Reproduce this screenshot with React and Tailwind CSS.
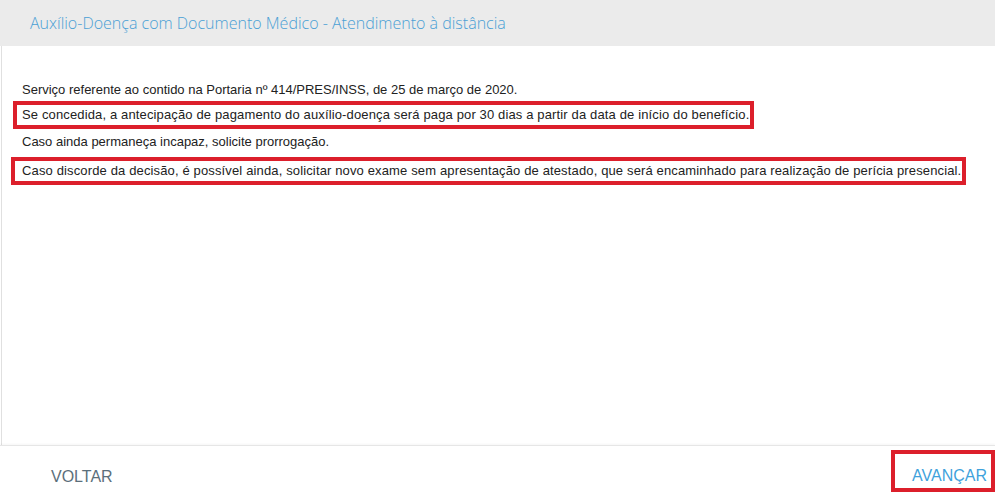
export default function App() {
  return (
    <div className="w-[995px] h-[492px] bg-white flex flex-col overflow-hidden" style={{ fontFamily: '"Liberation Sans", Arial, sans-serif' }}>
      <div className="h-[46px] bg-[#ebebeb] flex items-center pl-[30px] shrink-0">
        <span className="text-[16px] text-[#4aa0d5] font-light" style={{ fontFamily: '"Open Sans", sans-serif' }}>
          Auxílio-Doença com Documento Médico - Atendimento à distância
        </span>
      </div>
      <div className="flex-1 border-l border-[#e0e0e0] ml-[1px] pl-[20px] pt-[36px] text-[13px] text-[#222] leading-[16px]">
        <p className="mb-[3px]">Serviço referente ao contido na Portaria nº 414/PRES/INSS, de 25 de março de 2020.</p>
        <div className="-ml-[9px] mb-[5px]">
          <span className="inline-block border-4 border-[#dc1f2b] pl-[5px] pr-[1px] py-[2px] tracking-[0.14px]">
            Se concedida, a antecipação de pagamento do auxílio-doença será paga por 30 dias a partir da data de início do benefício.
          </span>
        </div>
        <p className="mb-[7px]">Caso ainda permaneça incapaz, solicite prorrogação.</p>
        <div className="-ml-[11px]">
          <span className="inline-block border-4 border-[#dc1f2b] pl-[7px] pr-[1px] py-[2px] tracking-[0.14px]">
            Caso discorde da decisão, é possível ainda, solicitar novo exame sem apresentação de atestado, que será encaminhado para realização de perícia presencial.
          </span>
        </div>
      </div>
      <div className="h-[47px] shrink-0 border-t border-[#e6e6e6] shadow-[0_-1px_2px_rgba(0,0,0,0.04)] flex items-end justify-between">
        <span className="ml-[51px] mb-[3px] text-[16px] text-[#5b6f7b]">VOLTAR</span>
        <div className="w-[104px] h-[42px] border-4 border-[#dc1f2b] flex items-center justify-end pr-[4px]">
          <span className="text-[16px] text-[#3fa2dc] mt-[10px]">AVANÇAR</span>
        </div>
      </div>
    </div>
  );
}
